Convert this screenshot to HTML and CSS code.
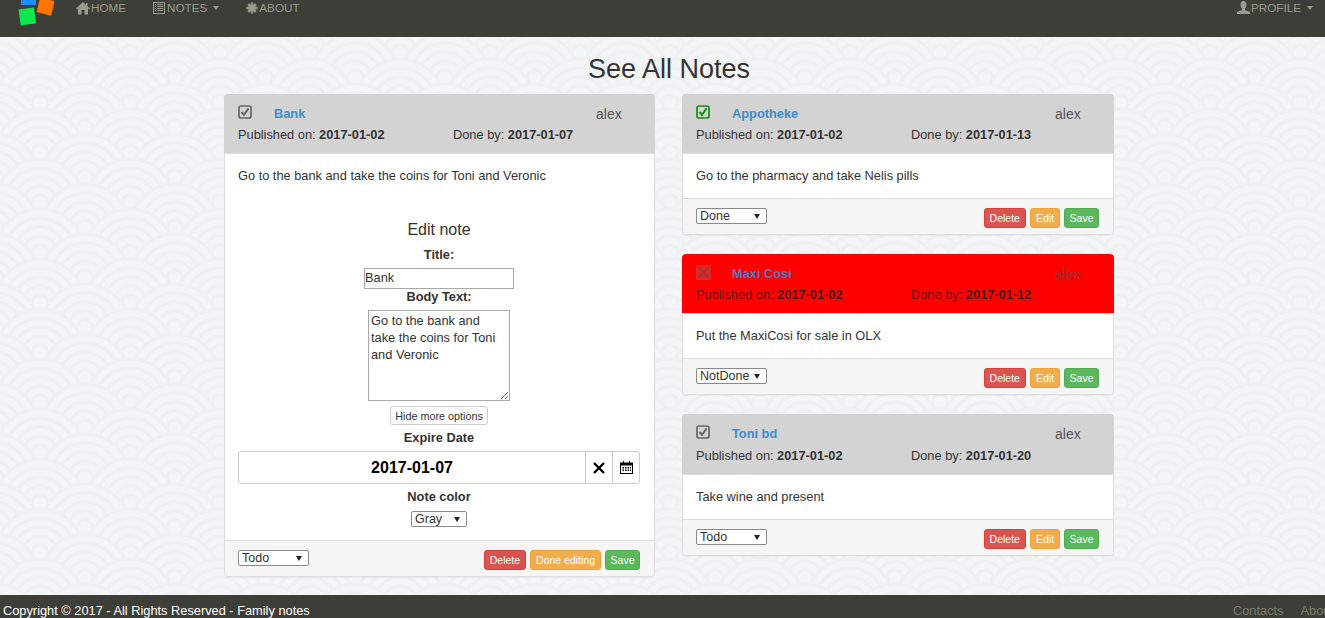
FILE: index.html
```html
<!DOCTYPE html>
<html lang="en">
<head>
  <meta charset="UTF-8">
  <title>See All Notes</title>
  <link rel="stylesheet" href="styles.css">
</head>
<body>

  <nav class="topbar">
    <svg class="logo" width="36" height="26" viewBox="0 0 36 26">
      <rect x="3" y="-9" width="15" height="14" fill="#1e8cff"/>
      <rect x="20" y="-1" width="15" height="15" fill="#ff7300" transform="rotate(14 27 7)"/>
      <rect x="1.500" y="8.500" width="15.500" height="16" fill="#0de84a" transform="rotate(-8 9 16)"/>
    </svg>
    <a class="navlink" href="#">
      <svg class="icon" width="14" height="14" viewBox="0 0 14 14"><path d="M7 1 0 7.500 1 8.500 2 7.600V13.500H5.500V9H8.500V13.500H12V7.600L13 8.500 14 7.500 11.500 5.200V2H10V3.800Z"/></svg>
      HOME
    </a>
    <a class="navlink" href="#">
      <svg class="icon" width="13" height="14" viewBox="0 0 13 14"><path fill-rule="evenodd" d="M0 1H12V13H0ZM1 2V12H11V2ZM2 3H3V4H2ZM4 3H10V4H4ZM2 5H3V6H2ZM4 5H10V6H4ZM2 7H3V8H2ZM4 7H10V8H4ZM2 9H3V10H2ZM4 9H10V10H4Z"/></svg>
      NOTES <span class="caret"></span>
    </a>
    <a class="navlink" href="#">
      <svg class="icon" width="12" height="14" viewBox="0 0 12 14"><g stroke="#9b9b90" stroke-width="2.400"><path d="M6 1.500V12.500M.5 7H11.500M2.200 3.200 9.800 10.800M9.800 3.200 2.200 10.800"/></g></svg>
      ABOUT
    </a>
    <a class="navlink profile" href="#">
      <svg class="icon" width="13" height="14" viewBox="0 0 13 14"><path d="M6.500 0C8.500 0 9.500 1.500 9.500 3.500 9.500 5.500 8.700 7 8 7.800V9L13 11V13H0V11L5 9V7.800C4.300 7 3.500 5.500 3.500 3.500 3.500 1.500 4.500 0 6.500 0Z"/></svg>
      PROFILE <span class="caret"></span>
    </a>
  </nav>

  <main class="content">
    <h1 class="page-title">See All Notes</h1>

    <div class="columns">
      <div class="column">
        <div class="note">
          <div class="note-head">
            <svg class="check" width="14" height="14" viewBox="0 0 14 14"><rect x="1" y="1" width="12" height="12" rx="2" fill="none" stroke="#666" stroke-width="1.700"/><path d="M3.500 7 6 9.800 10.500 3.500" fill="none" stroke="#666" stroke-width="2"/></svg>
            <a class="note-title" href="#">Bank</a>
            <span class="note-user">alex</span>
            <div class="note-dates">
              <span class="published">Published on: <b>2017-01-02</b></span>
              <span>Done by: <b>2017-01-07</b></span>
            </div>
          </div>
          <div class="note-body">
            <p>Go to the bank and take the coins for Toni and Veronic</p>
            <form class="edit-form">
              <h4>Edit note</h4>
              <label class="title-label">Title:</label>
              <input class="title-input" type="text" value="Bank">
              <label class="body-label">Body Text:</label>
              <textarea class="body-input">Go to the bank and take the coins for Toni and Veronic</textarea>
              <button class="more-btn" type="button">Hide more options</button>
              <label class="date-label">Expire Date</label>
              <div class="date-group">
                <input class="date-input" type="text" value="2017-01-07">
                <span class="date-addon">
                  <svg width="12" height="12" viewBox="0 0 12 12"><path d="M1 1 11 11M11 1 1 11" stroke="#000" stroke-width="2.400"/></svg>
                </span>
                <span class="date-addon">
                  <svg width="13" height="13" viewBox="0 0 13 13"><path fill-rule="evenodd" d="M3 0H4V1.500H9V0H10V1.500H13V13H0V1.500H3ZM1 4.500V12H12V4.500ZM2.500 6H4V7.500H2.500ZM5 6H6.500V7.500H5ZM7.500 6H9V7.500H7.500ZM10 6H11V7.500H10ZM2.500 8.500H4V10H2.500ZM5 8.500H6.500V10H5ZM7.500 8.500H9V10H7.500ZM10 8.500H11V10H10Z"/></svg>
                </span>
              </div>
              <label class="color-label">Note color</label>
              <select class="color-select"><option>Gray</option></select>
            </form>
          </div>
          <div class="note-foot">
            <select class="status"><option>Todo</option></select>
            <div class="actions">
              <button class="btn btn-delete" type="button">Delete</button>
              <button class="btn btn-edit" type="button">Done editing</button>
              <button class="btn btn-save" type="button">Save</button>
            </div>
          </div>
        </div>
      </div>

      <div class="column">
        <div class="note">
          <div class="note-head">
            <svg class="check" width="14" height="14" viewBox="0 0 14 14"><rect x="1" y="1" width="12" height="12" rx="2" fill="none" stroke="#159015" stroke-width="1.700"/><path d="M3.500 7 6 9.800 10.500 3.500" fill="none" stroke="#159015" stroke-width="2"/></svg>
            <a class="note-title" href="#">Appotheke</a>
            <span class="note-user">alex</span>
            <div class="note-dates">
              <span class="published">Published on: <b>2017-01-02</b></span>
              <span>Done by: <b>2017-01-13</b></span>
            </div>
          </div>
          <div class="note-body"><p>Go to the pharmacy and take Nelis pills</p></div>
          <div class="note-foot">
            <select class="status"><option>Done</option></select>
            <div class="actions">
              <button class="btn btn-delete" type="button">Delete</button>
              <button class="btn btn-edit" type="button">Edit</button>
              <button class="btn btn-save" type="button">Save</button>
            </div>
          </div>
        </div>

        <div class="note note-red">
          <div class="note-head">
            <svg class="check" width="15" height="15" viewBox="0 0 15 15"><rect width="15" height="15" rx="1" fill="#d92a2a"/><path d="M2.500 2.500 12.500 12.500M12.500 2.500 2.500 12.500" stroke="#b83030" stroke-width="2"/></svg>
            <a class="note-title" href="#">Maxi Cosi</a>
            <span class="note-user">alex</span>
            <div class="note-dates">
              <span class="published">Published on: <b>2017-01-02</b></span>
              <span>Done by: <b>2017-01-12</b></span>
            </div>
          </div>
          <div class="note-body"><p>Put the MaxiCosi for sale in OLX</p></div>
          <div class="note-foot">
            <select class="status"><option>NotDone</option></select>
            <div class="actions">
              <button class="btn btn-delete" type="button">Delete</button>
              <button class="btn btn-edit" type="button">Edit</button>
              <button class="btn btn-save" type="button">Save</button>
            </div>
          </div>
        </div>

        <div class="note note-tall">
          <div class="note-head">
            <svg class="check" width="14" height="14" viewBox="0 0 14 14"><rect x="1" y="1" width="12" height="12" rx="2" fill="none" stroke="#666" stroke-width="1.700"/><path d="M3.500 7 6 9.800 10.500 3.500" fill="none" stroke="#666" stroke-width="2"/></svg>
            <a class="note-title" href="#">Toni bd</a>
            <span class="note-user">alex</span>
            <div class="note-dates">
              <span class="published">Published on: <b>2017-01-02</b></span>
              <span>Done by: <b>2017-01-20</b></span>
            </div>
          </div>
          <div class="note-body"><p>Take wine and present</p></div>
          <div class="note-foot">
            <select class="status"><option>Todo</option></select>
            <div class="actions">
              <button class="btn btn-delete" type="button">Delete</button>
              <button class="btn btn-edit" type="button">Edit</button>
              <button class="btn btn-save" type="button">Save</button>
            </div>
          </div>
        </div>
      </div>
    </div>
  </main>

  <footer class="bottombar">
    <span class="copyright">Copyright © 2017 - All Rights Reserved - Family notes</span>
    <div class="bottom-links">
      <a href="#">Contacts</a>
      <a href="#">About</a>
    </div>
  </footer>

</body>
</html>
```

FILE: styles.css
```css
* {
  box-sizing: border-box;
}
body {
  margin: 0;
  height: 100vh;
  overflow: hidden;
  display: flex;
  flex-direction: column;
  font-family: "Liberation Sans", Arial, sans-serif;
  font-size: 12.8px;
  line-height: 20px;
  color: #333;
  background-color: #f4f5f7;
  background-image: url("data:image/svg+xml,%3Csvg xmlns='http://www.w3.org/2000/svg' width='90' height='50'%3E%3Cdefs%3E%3Cg id='s' fill='%23f4f5f7' stroke='%23eff0f2' stroke-width='3'%3E%3Ccircle r='44'/%3E%3Ccircle r='35'/%3E%3Ccircle r='26'/%3E%3Ccircle r='17'/%3E%3Ccircle r='8'/%3E%3C/g%3E%3C/defs%3E%3Cuse href='%23s' x='40' y='-47'/%3E%3Cuse href='%23s' x='-5' y='-22'/%3E%3Cuse href='%23s' x='85' y='-22'/%3E%3Cuse href='%23s' x='40' y='3'/%3E%3Cuse href='%23s' x='130' y='3'/%3E%3Cuse href='%23s' x='-50' y='3'/%3E%3Cuse href='%23s' x='-5' y='28'/%3E%3Cuse href='%23s' x='85' y='28'/%3E%3Cuse href='%23s' x='40' y='53'/%3E%3Cuse href='%23s' x='130' y='53'/%3E%3Cuse href='%23s' x='-50' y='53'/%3E%3Cuse href='%23s' x='-5' y='78'/%3E%3Cuse href='%23s' x='85' y='78'/%3E%3C/svg%3E");
}
a {
  text-decoration: none;
}

/* top bar */
.topbar {
  flex: none;
  height: 37px;
  display: flex;
  align-items: flex-start;
  gap: 27px;
  padding: 0 12px 0 18px;
  background: #3e3e38;
  overflow: hidden;
}
.logo {
  display: block;
  margin-right: -5px;
}
.navlink {
  display: flex;
  align-items: center;
  gap: 1px;
  height: 16px;
  font-size: 11.7px;
  line-height: 16px;
  color: #9b9b90;
}
.icon {
  fill: #9b9b90;
}
.caret {
  width: 0;
  height: 0;
  margin-left: 5px;
  border-top: 4px solid #9b9b90;
  border-left: 3px solid transparent;
  border-right: 3px solid transparent;
}
.profile {
  margin-left: auto;
}

/* main area */
.content {
  flex: 1;
  min-height: 0;
  padding-left: 13px;
}
.page-title {
  margin: 0;
  padding-top: 16px;
  height: 57px;
  font-size: 27px;
  line-height: 32px;
  font-weight: normal;
  text-align: center;
}
.columns {
  display: grid;
  grid-template-columns: 431px 432px;
  justify-content: center;
  gap: 27px;
}
.column {
  display: flex;
  flex-direction: column;
  gap: 19px;
}
.note {
  background: #fff;
  border: 1px solid #ddd;
  border-radius: 4px;
  box-shadow: 0 1px 1px rgba(0, 0, 0, .05);
}
.note-head {
  display: grid;
  grid-template-columns: 36px 1fr 44px;
  align-items: center;
  row-gap: 1px;
  margin: -1px -1px 0;
  padding: 10px 15px 8px 14px;
  height: 60px;
  background: #d3d3d3;
  border-bottom: 1px solid #ddd;
  border-radius: 4px 4px 0 0;
}
.note-tall .note-head {
  row-gap: 2px;
  height: 61px;
}
.check {
  margin-bottom: 4px;
}
.note-title {
  font-weight: bold;
  color: #428bca;
}
.note-user {
  font-size: 14px;
  color: #555;
}
.note-dates {
  grid-column: 1 / -1;
  display: flex;
}
.published {
  width: 215px;
}
.note-body {
  padding: 12px 14px 12px 13px;
}
.note-body p {
  margin: 0;
}
.note-foot {
  display: flex;
  justify-content: space-between;
  align-items: flex-start;
  height: 36px;
  padding: 9px 14px 0 13px;
  background: #f5f5f5;
  border-top: 1px solid #ddd;
  border-radius: 0 0 3px 3px;
}
.actions {
  display: flex;
  gap: 4px;
}
.btn {
  height: 20px;
  padding: 1px 5px;
  border: 1px solid transparent;
  border-radius: 3px;
  font-family: inherit;
  font-size: 10.5px;
  line-height: 16px;
  color: #fff;
}
.btn-delete {
  background: #d9534f;
  border-color: #d43f3a;
}
.btn-edit {
  background: #f0ad4e;
  border-color: #eea236;
}
.btn-save {
  padding: 1px 4.5px;
  background: #5cb85c;
  border-color: #4cae4c;
}

/* red note */
.note-red .note-head {
  background: #f00;
}
.note-red .note-title {
  color: #4d78c4;
}
.note-red .note-user {
  color: #a32a2a;
}
.note-red .note-dates {
  color: #6b1414;
}
.note-red .note-dates b {
  color: #3d1f1f;
}

/* selects */
select {
  appearance: none;
  height: 16px;
  padding: 0 0 0 3px;
  border: 1px solid #8a8a8a;
  border-radius: 2px;
  font-family: inherit;
  font-size: 12.5px;
  line-height: 14px;
  color: #333;
  background: #fff url("data:image/svg+xml,%3Csvg xmlns='http://www.w3.org/2000/svg' width='6' height='5'%3E%3Cpath d='M0 0H6L3 5Z' fill='%23222'/%3E%3C/svg%3E") no-repeat right 6px center;
}
.status {
  width: 71px;
}
.color-select {
  width: 56px;
}

/* edit form */
.edit-form {
  display: flex;
  flex-direction: column;
  align-items: center;
  margin: 35px 0 1px;
}
.edit-form h4 {
  margin: 0 0 8px;
  font-size: 16px;
  line-height: 18px;
  font-weight: normal;
}
.edit-form label {
  font-weight: bold;
  line-height: 16px;
}
.title-label {
  margin-bottom: 5px;
}
.body-label {
  margin-bottom: 5px;
}
.date-label {
  margin: 5px 0 5px;
}
.color-label {
  margin: 5px 0 6px;
}
.title-input,
.body-input {
  border: 1px solid #a9a9a9;
  font-family: inherit;
  font-size: 12.8px;
  color: #333;
}
.title-input {
  width: 150px;
  height: 21px;
  padding: 0 0 2px;
}
.body-input {
  width: 142px;
  height: 91px;
  padding: 1px 2px;
  line-height: 17px;
  margin-bottom: 5px;
}
.more-btn {
  width: 98px;
  height: 19px;
  padding: 0;
  background: #fff;
  border: 1px solid #ccc;
  border-radius: 3px;
  font-family: inherit;
  font-size: 10.8px;
  line-height: 16px;
  color: #333;
}
.date-group {
  display: flex;
  align-self: stretch;
  height: 33px;
  border: 1px solid #ccc;
  border-radius: 3px;
}
.date-input {
  flex: 1;
  min-width: 0;
  border: none;
  background: transparent;
  text-align: center;
  font-family: inherit;
  font-size: 16px;
  font-weight: bold;
  color: #000;
}
.date-addon {
  width: 27px;
  display: flex;
  align-items: center;
  justify-content: center;
  border-left: 1px solid #ccc;
}

/* footer */
.bottombar {
  flex: none;
  height: 23px;
  display: flex;
  justify-content: space-between;
  align-items: flex-start;
  padding: 7px 0 0 3px;
  background: #3e3e38;
  line-height: 18px;
  overflow: hidden;
  white-space: nowrap;
}
.copyright {
  color: #fff;
}
.bottom-links {
  width: 92px;
  display: flex;
  gap: 17px;
}
.bottom-links a {
  color: #7d7d72;
}
```
